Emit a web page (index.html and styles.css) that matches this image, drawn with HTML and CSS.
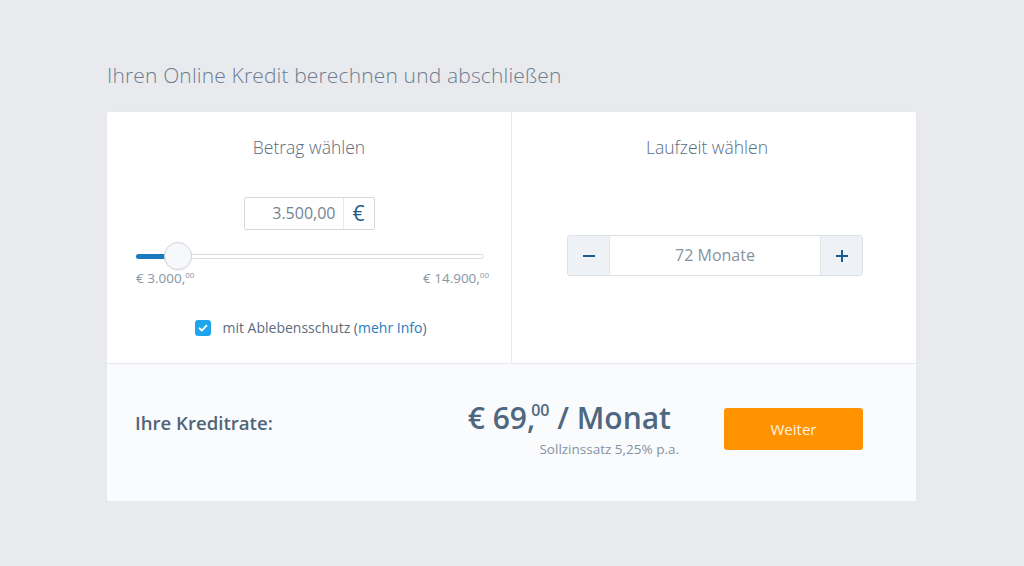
FILE: index.html
```html
<!DOCTYPE html>
<html lang="de">
<head>
<meta charset="utf-8">
<title>Kreditrechner</title>
<link rel="stylesheet" href="styles.css">
</head>
<body>
<main class="page">
  <h1 class="title">Ihren Online Kredit berechnen und abschließen</h1>
  <section class="card">
    <div class="top">
      <div class="col col-left">
        <h2 class="col-title">Betrag wählen</h2>
        <div class="amount">
          <span class="amount-value">3.500,00</span>
          <span class="amount-cur">€</span>
        </div>
        <div class="slider">
          <div class="track"><div class="fill" style="width:42px"></div></div>
          <div class="thumb" style="left:42px"></div>
        </div>
        <div class="range">
          <span>€ 3.000,<sup>00</sup></span>
          <span>€ 14.900,<sup>00</sup></span>
        </div>
        <label class="check">
          <span class="box"><svg viewBox="0 0 16 16" width="16" height="16"><path d="M4.5 8.3l2.3 2.2 4.7-4.8" fill="none" stroke="#fff" stroke-width="1.8" stroke-linecap="round" stroke-linejoin="round"/></svg></span>
          <span class="check-text">mit Ablebensschutz (<a class="link" href="#">mehr Info</a>)</span>
        </label>
      </div>
      <div class="col col-right">
        <h2 class="col-title col-title-right">Laufzeit wählen</h2>
        <div class="stepper">
          <button class="step-btn" type="button"><svg viewBox="0 0 16 16" width="16" height="16"><path d="M2 8h12" stroke="#1d5a8a" stroke-width="2"/></svg></button>
          <div class="step-value">72 Monate</div>
          <button class="step-btn" type="button"><svg viewBox="0 0 16 16" width="16" height="16"><path d="M2 8h12M8 2v12" stroke="#1d5a8a" stroke-width="2"/></svg></button>
        </div>
      </div>
    </div>
    <div class="bottom">
      <div class="rate-label">Ihre Kreditrate:</div>
      <div class="rate">
        <div class="rate-value">€ 69,<sup>00</sup> / Monat</div>
        <div class="rate-note">Sollzinssatz 5,25% p.a.</div>
      </div>
      <button class="cta" type="button">Weiter</button>
    </div>
  </section>
</main>
</body>
</html>
```
FILE: styles.css
```css
* { box-sizing: border-box; }
html, body { margin: 0; padding: 0; }
body {
  background: #e9eaee;
  font-family: "Open Sans", "Liberation Sans", sans-serif;
  color: #5a6b7e;
}
.page {
  width: 809px;
  margin-left: 107px;
  padding-top: 60px;
}
.title {
  margin: 0 0 22px 0;
  font-size: 21px;
  font-weight: 300;
  color: #6c7d90;
  line-height: 30px;
  letter-spacing: 0.15px;
}
.card {
  background: #fff;
  border-radius: 2px;
  box-shadow: 0 0 1px rgba(0,0,0,0.08);
  overflow: hidden;
}
.top {
  display: grid;
  grid-template-columns: 405px 1fr;
  height: 252px;
  border-bottom: 1px solid #e6e9ee;
}
.col { display: flex; flex-direction: column; align-items: center; }
.col-left { border-right: 1px solid #e6e9ee; }
.col-title {
  margin: 23px 0 0 0;
  font-size: 17.5px;
  font-weight: 300;
  color: #5b6c7f;
  line-height: 24px;
}
.col-title-right { margin-right: 14px; }
.amount {
  margin-top: 38px;
  width: 131px;
  height: 33px;
  border: 1px solid #d3d9e0;
  border-radius: 2px;
  display: flex;
  align-items: stretch;
}
.amount-value {
  flex: 1;
  text-align: right;
  padding-right: 7px;
  font-size: 16px;
  line-height: 31px;
  color: #758394;
}
.amount-cur {
  width: 31px;
  border-left: 1px solid #e6e9ee;
  text-align: center;
  font-size: 21px;
  line-height: 30px;
  color: #1d5a8a;
}
.slider {
  position: relative;
  width: 348px;
  height: 28px;
  margin-top: 12px;
  align-self: flex-start;
  margin-left: 29px;
}
.track {
  position: absolute;
  left: 0; right: 0; top: 12px;
  height: 5px;
  border: 1px solid #d8dde3;
  border-radius: 3px;
  background: #fff;
}
.fill {
  height: 5px;
  margin: -1px 0 0 -1px;
  background: #1a7bbf;
  border-radius: 3px 0 0 3px;
}
.thumb {
  position: absolute;
  top: 0;
  width: 28px;
  height: 28px;
  margin-left: -14px;
  border-radius: 50%;
  background: #f7f8fa;
  border: 1px solid #cfd5dc;
  box-shadow: 0 1px 2px rgba(0,0,0,0.06);
}
.range {
  width: 353px;
  align-self: flex-start;
  margin-left: 29px;
  margin-top: -4px;
  display: flex;
  justify-content: space-between;
  font-size: 13.5px;
  line-height: 18px;
  color: #8795a5;
}
.range sup { font-size: 8px; vertical-align: 5px; }
.check {
  margin-top: 31px;
  display: flex;
  align-items: center;
  gap: 11px;
  margin-left: 4px;
}
.box {
  width: 16px;
  height: 16px;
  border-radius: 3px;
  background: #1ea6ec;
  display: block;
}
.box svg { display: block; }
.check-text { font-size: 14px; color: #5d6d80; line-height: 20px; }
.link { color: #1f7dc0; text-decoration: none; }
.stepper {
  margin-top: 76px;
  margin-left: 2px;
  width: 296px;
  height: 41px;
  display: flex;
  border: 1px solid #dde2e8;
  border-radius: 3px;
  overflow: hidden;
}
.step-btn {
  width: 41px;
  border: 0;
  margin: 0;
  padding: 0;
  background: #eef1f5;
  display: flex;
  align-items: center;
  justify-content: center;
}
.step-value {
  flex: 1;
  background: #fff;
  border-left: 1px solid #e3e7ec;
  border-right: 1px solid #e3e7ec;
  text-align: center;
  font-size: 16px;
  line-height: 39px;
  color: #8693a1;
}
.bottom {
  height: 137px;
  background: #f9fbfd;
  display: flex;
  align-items: flex-start;
  padding-left: 28px;
}
.rate-label {
  margin-top: 46px;
  font-size: 18.6px;
  font-weight: 600;
  color: #4f6479;
  width: 305px;
}
.rate {
  margin-top: 35px;
  display: flex;
  flex-direction: column;
  align-items: flex-end;
  width: 239px;
}
.rate-value {
  font-size: 30px;
  font-weight: 600;
  color: #4e6881;
  line-height: 38px;
  padding-right: 8px;
  white-space: nowrap;
}
.rate-value sup { font-size: 16px; vertical-align: 13px; line-height: 0; margin-left: -4px; }
.rate-note {
  font-size: 13.5px;
  color: #8592a1;
  line-height: 18px;
  margin-top: 3px;
}
.cta {
  margin-top: 44px;
  margin-left: 45px;
  width: 139px;
  height: 42px;
  border: 0;
  border-radius: 3px;
  background: #ff9200;
  color: #fff3e0;
  font-family: "Open Sans", "Liberation Sans", sans-serif;
  font-size: 15px;
}
```
